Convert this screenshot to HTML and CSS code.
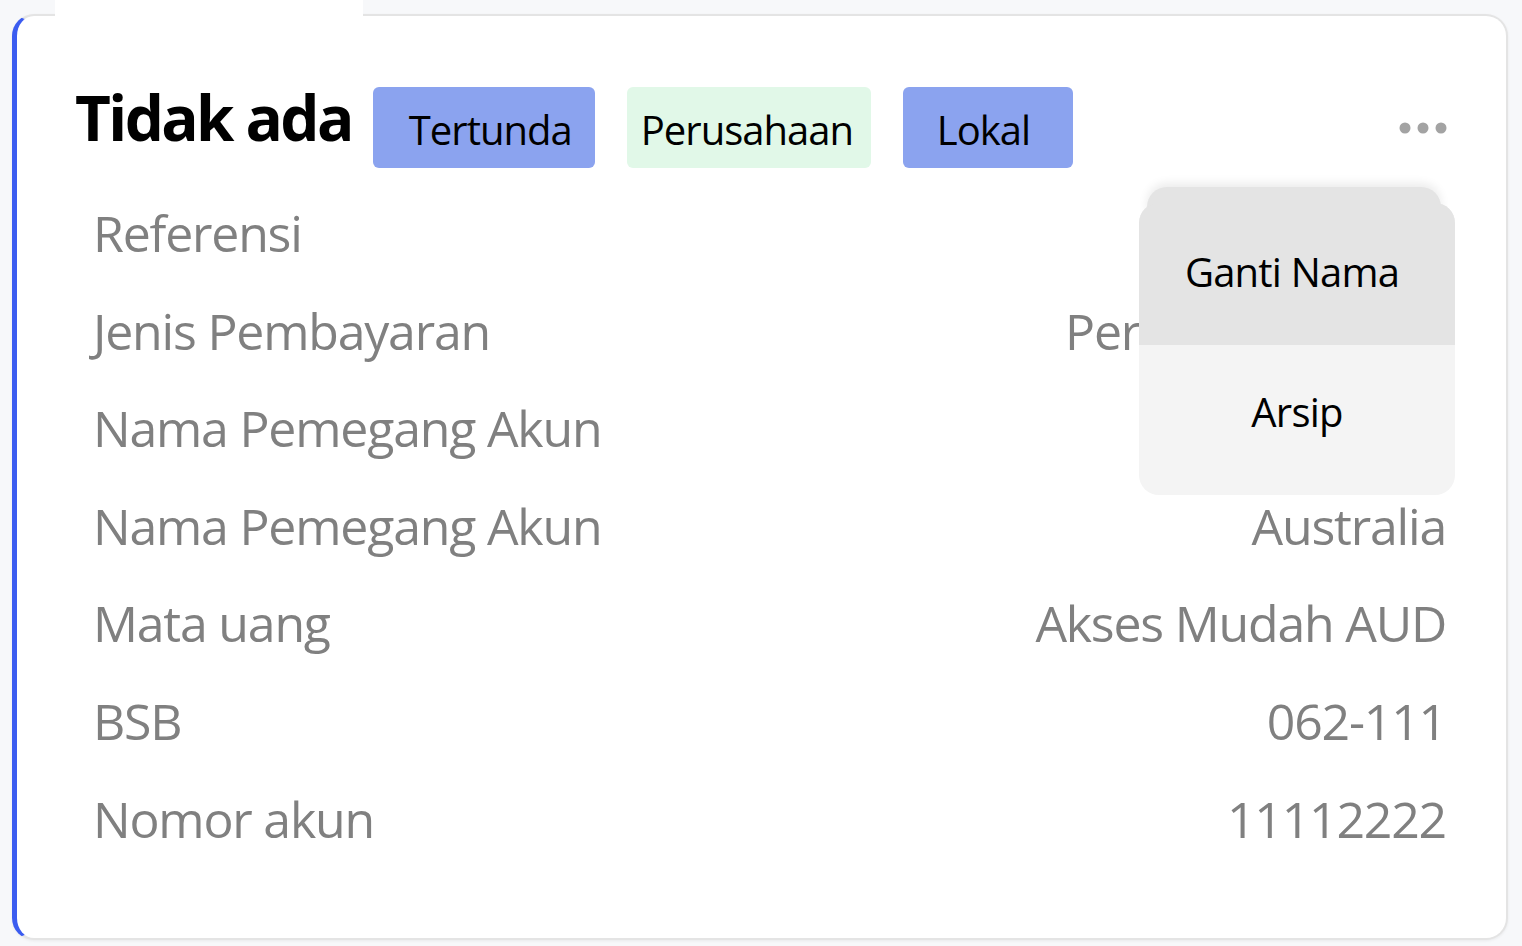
FILE: index.html
```html
<!DOCTYPE html>
<html lang="id">
<head>
<meta charset="utf-8">
<title>Rekening</title>
<link rel="stylesheet" href="styles.css">
</head>
<body>
<div class="page">
  <div class="tab-cover"></div>
  <section class="card">
    <header class="card-head">
      <h1 class="title">Tidak ada</h1>
      <span class="badge badge-blue badge-tertunda">Tertunda</span>
      <span class="badge badge-green badge-perusahaan">Perusahaan</span>
      <span class="badge badge-blue badge-lokal">Lokal</span>
      <button class="more" aria-label="Lainnya">
        <svg width="48" height="14" viewBox="0 0 48 14"><circle cx="6" cy="7" r="5.5" fill="#a3a3a3"/><circle cx="24" cy="7" r="5.5" fill="#a3a3a3"/><circle cx="42" cy="7" r="5.5" fill="#a3a3a3"/></svg>
      </button>
    </header>
    <dl class="rows">
      <div class="row"><dt>Referensi</dt><dd>-</dd></div>
      <div class="row"><dt>Jenis Pembayaran</dt><dd>Perusahaan lokal</dd></div>
      <div class="row"><dt>Nama Pemegang Akun</dt><dd>ABC</dd></div>
      <div class="row"><dt>Nama Pemegang Akun</dt><dd>Australia</dd></div>
      <div class="row"><dt>Mata uang</dt><dd>Akses Mudah AUD</dd></div>
      <div class="row"><dt>BSB</dt><dd>062-111</dd></div>
      <div class="row"><dt>Nomor akun</dt><dd>11112222</dd></div>
    </dl>
    <ul class="menu">
      <li class="menu-item menu-item-active">Ganti Nama</li>
      <li class="menu-item">Arsip</li>
    </ul>
  </section>
</div>
</body>
</html>
```

FILE: styles.css
```css
* { box-sizing: border-box; }
html, body { margin: 0; padding: 0; }
body {
  background: #f7f8fa;
  font-family: "Open Sans", "Noto Sans", sans-serif;
  width: 1522px;
  height: 946px;
  overflow: hidden;
}
.page {
  position: relative;
  padding: 14px 14px 0 12px;
}
.tab-cover {
  position: absolute;
  left: 55px;
  top: 0;
  width: 308px;
  height: 18px;
  background: #fff;
  z-index: 2;
}
.card {
  position: relative;
  height: 926px;
  background: #fff;
  border: 2px solid #e4e4e4;
  border-left: 5px solid #3b5cf0;
  border-radius: 22px;
  box-shadow: 0 1px 3px rgba(0,0,0,0.06);
  padding: 71px 60px 0 58px;
}
.card-head {
  display: flex;
  align-items: center;
  height: 81px;
}
.title {
  margin: 0 21px 0 0;
  font-size: 62px;
  font-weight: 700;
  color: #000;
  letter-spacing: -2.6px;
  line-height: 1;
  position: relative;
  top: -11px;
}
.badge {
  height: 81px;
  display: flex;
  align-items: center;
  font-size: 40px;
  color: #000;
  border-radius: 6px;
  letter-spacing: -1px;
  margin-right: 32px;
  padding-top: 4px;
}
.badge-blue { background: #8ba3ef; }
.badge-green { background: #e1f8e8; }
.badge-tertunda { width: 222px; padding-left: 36px; }
.badge-perusahaan { width: 244px; padding-left: 14px; }
.badge-lokal { width: 170px; padding-left: 34px; }
.more {
  margin-left: auto;
  margin-right: -1px;
  border: 0;
  background: none;
  padding: 0;
  display: flex;
  filter: blur(0.6px);
}
.rows {
  margin: 17px 0 0;
  padding-left: 18px;
}
.row {
  display: flex;
  justify-content: space-between;
  align-items: center;
  height: 97.6px;
  font-size: 50px;
  color: #808080;
}
.row dt, .row dd { margin: 0; line-height: 97.6px; letter-spacing: -1.2px; }
.menu {
  position: absolute;
  left: 1122px;
  top: 187px;
  width: 316px;
  margin: 0;
  padding: 0;
  list-style: none;
  background: #f4f4f4;
  border-radius: 20px;
}
.menu::before {
  content: "";
  position: absolute;
  left: 8px;
  right: 14px;
  top: -16px;
  height: 30px;
  background: #e4e4e4;
  border-radius: 20px 20px 0 0;
  box-shadow: 0 -4px 10px rgba(0,0,0,0.08);
}
.menu-item {
  position: relative;
  display: flex;
  align-items: center;
  justify-content: center;
  height: 150px;
  padding-bottom: 18px;
  font-size: 40px;
  color: #000;
  letter-spacing: -0.8px;
}
.menu-item-active {
  height: 142px;
  padding-bottom: 6px;
  padding-right: 10px;
  background: #e4e4e4;
  border-radius: 20px 20px 0 0;
}
```
